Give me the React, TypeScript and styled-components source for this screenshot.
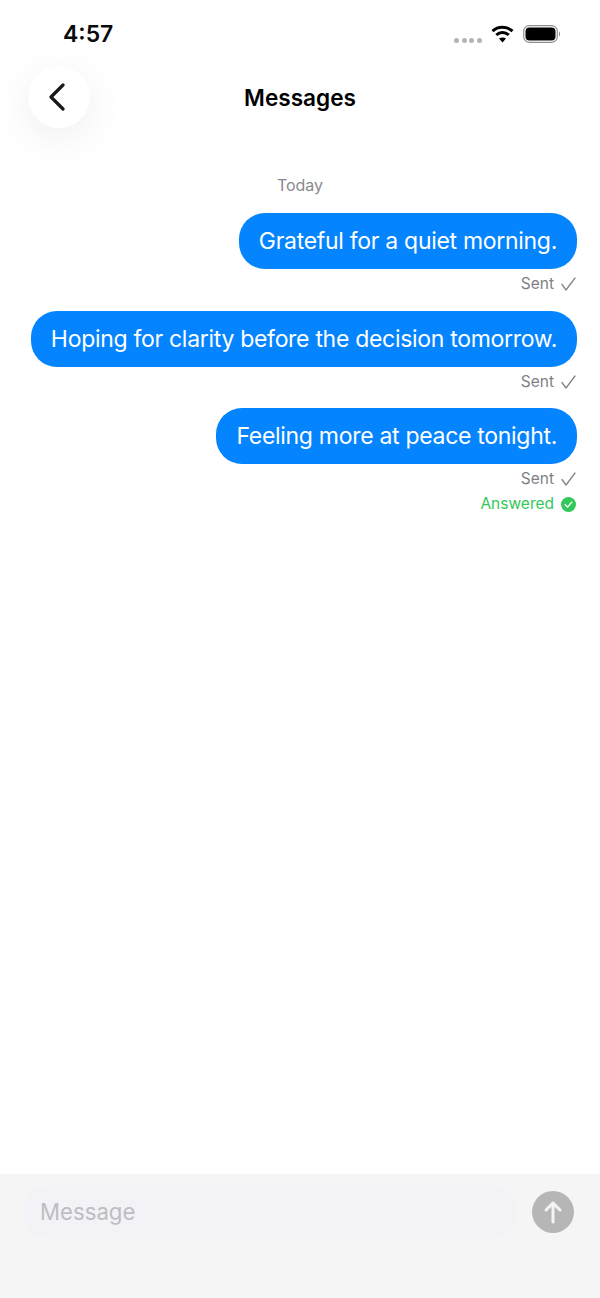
import React from "react";
import styled, { createGlobalStyle } from "styled-components";

const Global = createGlobalStyle`
  html, body { margin: 0; padding: 0; background: #fff; }
  * { box-sizing: border-box; }
`;

const Screen = styled.div`
  width: 600px;
  height: 1298px;
  display: flex;
  flex-direction: column;
  background: #fff;
  font-family: Inter, "Liberation Sans", sans-serif;
  overflow: hidden;
`;

const StatusBar = styled.div`
  height: 66px;
  display: flex;
  align-items: flex-start;
  justify-content: space-between;
  padding: 20px 39px 0 63px;
`;

const Clock = styled.div`
  font-size: 23px;
  line-height: 28px;
  font-weight: 600;
  color: #0a0a0a;
  width: 60px;
`;

const StatusIcons = styled.div`
  display: flex;
  align-items: center;
  gap: 9px;
  padding-top: 5px;
`;

const Dots = styled.div`
  display: flex;
  gap: 2.6px;
  margin-top: 13px;
`;

const Dot = styled.span`
  width: 5px;
  height: 5px;
  border-radius: 50%;
  background: #b4b4b4;
`;

const Header = styled.header`
  height: 62px;
  display: grid;
  grid-template-columns: 1fr auto 1fr;
  align-items: center;
  padding: 0 28px;
`;

const BackButton = styled.button`
  width: 62px;
  height: 62px;
  border: 0;
  padding: 0;
  border-radius: 50%;
  background: #fff;
  box-shadow: 0 10px 40px rgba(0, 0, 0, 0.07);
  display: flex;
  align-items: center;
  justify-content: center;
`;

const Title = styled.h1`
  margin: 1px 0 0;
  font-size: 22.6px;
  line-height: 28px;
  font-weight: 600;
  color: #000;
`;

const Thread = styled.main`
  flex: 1;
  display: flex;
  flex-direction: column;
  align-items: flex-end;
  padding: 47px 23px 0 30px;
`;

const DayLabel = styled.div`
  align-self: center;
  margin-right: 7px;
  font-size: 16px;
  line-height: 20px;
  color: #8a8a8e;
  margin-bottom: 18px;
`;

const Bubble = styled.div`
  height: 56px;
  display: flex;
  align-items: center;
  padding: 0 20px;
  border-radius: 26px;
  background: #0484ff;
  color: #fff;
  font-size: 23px;
  white-space: nowrap;
  letter-spacing: -0.3px;
`;

const Meta = styled.div<{ $color: string; $last?: boolean }>`
  display: flex;
  align-items: center;
  justify-content: flex-end;
  gap: 7px;
  height: 20px;
  margin-top: 5px;
  margin-bottom: ${(p) => (p.$last ? "0" : "16.5px")};
  font-size: 15.5px;
  line-height: 20px;
  color: ${(p) => p.$color};
  svg {
    margin-right: 1px;
  }
`;

const Composer = styled.footer`
  height: 124px;
  display: flex;
  align-items: flex-start;
  gap: 15px;
  padding: 11px 26px 0 23px;
  background: #f5f5f6;
`;

const InputPill = styled.div`
  flex: 1;
  height: 54px;
  padding: 0 17px 2px;
  border-radius: 27px;
  background: #f2f2f7;
  display: flex;
  align-items: center;
  font-size: 22.2px;
  color: #bdbdc3;
`;

const SendButton = styled.button`
  width: 42px;
  height: 42px;
  margin-top: 6px;
  border: 0;
  padding: 0;
  border-radius: 50%;
  background: #b6b6b6;
  display: flex;
  align-items: center;
  justify-content: center;
`;

const Check = () => (
  <svg width="15" height="14" viewBox="0 0 15 14" fill="none">
    <path d="M1 7.5 L5 13 L14 1" stroke="#848488" strokeWidth="1.3" strokeLinecap="round" strokeLinejoin="round" />
  </svg>
);

const messages = [
  "Grateful for a quiet morning.",
  "Hoping for clarity before the decision tomorrow.",
  "Feeling more at peace tonight.",
];

export default function App() {
  return (
    <Screen>
      <Global />
      <StatusBar>
        <Clock>4:57</Clock>
        <StatusIcons>
          <Dots>
            <Dot /><Dot /><Dot /><Dot />
          </Dots>
          <svg width="23" height="18" viewBox="0 0 23 18" fill="none" stroke="#000" strokeWidth="3" strokeLinecap="butt">
            <path d="M1.5 6.2 C7 1 16 1 21.5 6.2" />
            <path d="M5.3 10 C8.7 6.8 14.3 6.8 17.7 10" />
            <path d="M11.5 17.5 L8 13.6 C10 12.2 13 12.2 15 13.6 Z" fill="#000" stroke="none" />
          </svg>
          <svg width="38" height="18" viewBox="0 0 38 18" fill="none">
            <rect x="0.7" y="0.7" width="33.6" height="16.6" rx="5.5" stroke="#8e8e8e" strokeWidth="1.2" />
            <rect x="2.5" y="2.5" width="30" height="13" rx="4" fill="#000" />
            <path d="M36 6.5 C37.4 7 37.4 11 36 11.5 Z" fill="#8e8e8e" />
          </svg>
        </StatusIcons>
      </StatusBar>
      <Header>
        <BackButton aria-label="Back">
          <svg width="20" height="30" viewBox="0 0 20 30" fill="none">
            <path d="M15 3 L3 15 L15 27" stroke="#1a1a1a" strokeWidth="3.2" strokeLinecap="round" strokeLinejoin="round" transform="translate(-1 0)" />
          </svg>
        </BackButton>
        <Title>Messages</Title>
        <span />
      </Header>
      <Thread>
        <DayLabel>Today</DayLabel>
        {messages.map((m, i) => (
          <React.Fragment key={m}>
            <Bubble>{m}</Bubble>
            <Meta $color="#7f7f84" $last={i === messages.length - 1}>
              Sent <Check />
            </Meta>
          </React.Fragment>
        ))}
        <Meta $color="#34c759" $last>
          Answered
          <svg width="15" height="15" viewBox="0 0 16 16">
            <circle cx="8" cy="8" r="8" fill="#34c759" />
            <path d="M4.5 8.3 L7 10.8 L11.5 5.5" stroke="#fff" strokeWidth="1.5" fill="none" strokeLinecap="round" strokeLinejoin="round" />
          </svg>
        </Meta>
      </Thread>
      <Composer>
        <InputPill>Message</InputPill>
        <SendButton aria-label="Send">
          <svg width="20" height="24" viewBox="0 0 20 24" fill="none" stroke="#f4f4f4" strokeWidth="3" strokeLinecap="round" strokeLinejoin="round">
            <path d="M10 22 V3" />
            <path d="M3 10 L10 3 L17 10" />
          </svg>
        </SendButton>
      </Composer>
    </Screen>
  );
}
